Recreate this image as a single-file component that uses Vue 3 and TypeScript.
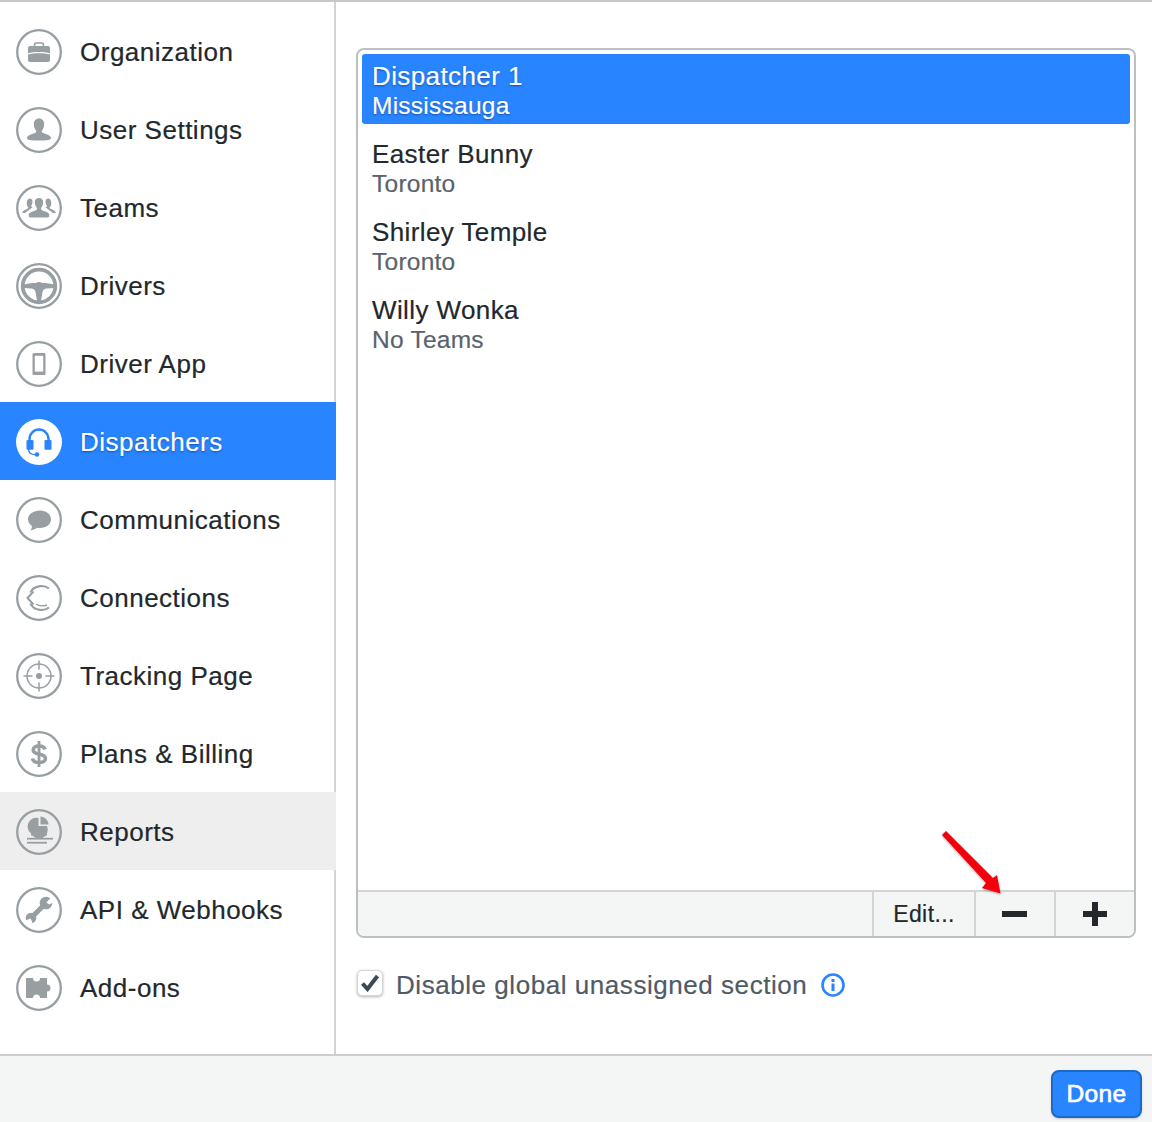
<script setup lang="ts">
const items = ['Organization','User Settings','Teams','Drivers','Driver App','Dispatchers','Communications','Connections','Tracking Page','Plans & Billing','Reports','API & Webhooks','Add-ons'];
const rows = [
  { name: 'Dispatcher 1', sub: 'Mississauga', selected: true },
  { name: 'Easter Bunny', sub: 'Toronto', selected: false },
  { name: 'Shirley Temple', sub: 'Toronto', selected: false },
  { name: 'Willy Wonka', sub: 'No Teams', selected: false },
];
</script>

<template>
  <div class="page">
    <div class="body">
      <nav class="side">
        <div v-for="(item, i) in items" :key="item" class="nav" :class="{ active: item === 'Dispatchers', hover: item === 'Reports' }">
          <svg class="ico" viewBox="0 0 46 46" width="46" height="46">
            <circle v-if="item === 'Dispatchers'" cx="23" cy="23" r="23" fill="#fff" />
            <circle v-else cx="23" cy="23" r="21.8" fill="none" stroke="#979fa3" stroke-width="2.3" />
            <g v-if="i === 0" fill="#979fa3">
              <path d="M12 19a2 2 0 0 1 2-2h18a2 2 0 0 1 2 2v5.2c-6-1.600-16-1.600-22 0z" />
              <path d="M12 25.400c6-1.600 16-1.600 22 0V31a2 2 0 0 1-2 2H14a2 2 0 0 1-2-2z" />
              <path d="M18.600 17v-1.600a1.400 1.400 0 0 1 1.400-1.400h6a1.400 1.400 0 0 1 1.400 1.400V17" fill="none" stroke="#979fa3" stroke-width="1.600" />
            </g>
            <path v-else-if="i === 1" fill="#979fa3" d="M23 11.500c3.200 0 5.200 2.400 5.200 5.600 0 2.600-1 5-2.200 6.400-.6.8-.3 1.800.6 2.300 2.800 1.400 8.400 2.400 8.400 5.400 0 1.600-4 2.400-12 2.400s-12-.8-12-2.400c0-3 5.600-4 8.400-5.400.9-.5 1.200-1.500.6-2.300-1.200-1.400-2.200-3.800-2.200-6.400 0-3.200 2-5.600 5.200-5.600z" />
            <g v-else-if="i === 2" fill="#979fa3">
              <path d="M13.500 13.500c1.800 0 3 1.200 3 3.200 0 1.500-.5 2.800-1.200 3.700-.3.500-.2 1 .3 1.300l1 .6-7.600 5.700H6.800c-.5 0-.8-.4-.5-.9 1-1.800 3.700-2.700 5.500-3.600.5-.3.6-.8.3-1.300-.8-1-1.400-2.400-1.400-3.800 0-2.500 1-4.900 2.800-4.900z" />
              <path d="M32.500 13.500c-1.800 0-3 1.200-3 3.200 0 1.500.5 2.800 1.200 3.700.3.500.2 1-.3 1.300l-1 .6 7.600 5.700h2.200c.5 0 .8-.4.5-.9-1-1.800-3.700-2.700-5.500-3.600-.5-.3-.6-.8-.3-1.300.8-1 1.400-2.400 1.400-3.800 0-2.500-1-4.900-2.800-4.900z" />
              <path stroke="#fff" stroke-width="1.200" d="M23 12.400c3 0 4.800 2.100 4.800 5.100 0 2.200-.9 4.200-1.900 5.400-.5.700-.3 1.500.5 1.900 2.500 1.200 7.600 2 7.600 4.700 0 1.900-.8 3.500-2 3.500H14c-1.200 0-2-1.600-2-3.500 0-2.700 5.100-3.500 7.600-4.700.8-.4 1-1.200.5-1.900-1-1.200-1.900-3.200-1.900-5.400 0-3 1.800-5.100 4.800-5.100z" />
            </g>
            <g v-else-if="i === 3">
              <circle cx="23" cy="23" r="16.300" fill="none" stroke="#979fa3" stroke-width="3.800" />
              <path fill="#979fa3" d="M7 21.500c5-.8 8-1.500 12-1.500h8c4 0 7 .7 12 1.500V25l-8 .5c-2.500 0-4 1.500-4.500 3.500L25 38h-4l-1.500-9c-.5-2-2-3.500-4.500-3.500L7 25z" />
              <circle cx="23" cy="23.500" r="4.500" fill="#979fa3" />
            </g>
            <g v-else-if="i === 4">
              <rect x="16.500" y="12" width="13" height="22" rx="1.500" fill="#979fa3" />
              <rect x="18.800" y="14.800" width="8.400" height="15.800" fill="#fff" />
            </g>
            <g v-else-if="i === 5" fill="#2884ff">
              <path d="M13.500 23.500v-3.500a9.500 9.500 0 0 1 19 0v3.500" fill="none" stroke="#2884ff" stroke-width="2.400" />
              <rect x="10.500" y="21" width="7" height="9.800" rx="1" />
              <rect x="28.500" y="21" width="7" height="9.800" rx="1" />
              <path d="M12.500 30c0 3.500 2 5.600 7 5.600" fill="none" stroke="#2884ff" stroke-width="1.300" />
              <circle cx="21" cy="35.500" r="2.300" />
            </g>
            <path v-else-if="i === 6" fill="#979fa3" d="M24 13.500c6.400 0 11 3.700 11 8.800S30.400 31 24 31c-1.100 0-2.200-.1-3.200-.3-1.600 1.400-3.800 2.400-6.300 2.700 1-1.300 1.500-2.800 1.400-4.400-2.400-1.600-3.900-4-3.900-6.700 0-5.100 5.600-8.800 12-8.800z" />
            <g v-else-if="i === 7" fill="none" stroke="#979fa3">
              <path d="M33 13.500c-3-2.300-6-2.800-9-2.400-5 .7-8.500 3.500-9.500 6.400" stroke-width="2.200" />
              <path d="M14.500 28.500c1 2.900 4.500 5.700 9.500 6.400 3 .4 6-.1 9-2.400" stroke-width="2.200" />
              <path d="M17.500 16.500L11.500 23l6 6.500" stroke-width="2" />
              <path d="M20 29c2.500 2 6.500 2.400 11 1" stroke-width="1.400" />
            </g>
            <g v-else-if="i === 8" fill="none" stroke="#979fa3" stroke-width="1.500">
              <circle cx="23" cy="23" r="12" />
              <path d="M23 7.500v9M23 29.500v9M7.500 23h9M29.500 23h9" />
              <circle cx="23" cy="23" r="3" fill="#979fa3" stroke="none" />
            </g>
            <g v-else-if="i === 9">
              <path fill="none" stroke="#979fa3" stroke-width="3.600" d="M29 18.500c-.5-2.300-2.700-3.500-6-3.500s-5.800 1.400-5.800 3.900c0 5.800 12.300 3 12.300 8.600 0 2.500-2.800 4-6.500 4-3.600 0-6-1.500-6.500-4" />
              <path stroke="#979fa3" stroke-width="2.800" fill="none" d="M23 10v26" />
            </g>
            <g v-else-if="i === 10" fill="#979fa3">
              <path d="M22.500 9v8h8.500A8.800 8.800 0 0 1 15 24.500 8.800 8.800 0 0 1 22.500 9z" />
              <path d="M24.500 7.500a8.500 8.500 0 0 1 8 8h-8z" />
              <rect x="15" y="25" width="16" height="1.500" />
              <rect x="11" y="28.800" width="26" height="1.800" />
              <rect x="11" y="32.800" width="20" height="1.800" />
            </g>
            <g v-else-if="i === 11" fill="#979fa3">
              <path d="M14.500 31.500L30 16" stroke="#979fa3" stroke-width="5" fill="none" />
              <circle cx="30" cy="16" r="6.300" />
              <circle cx="15" cy="31" r="5.300" />
              <path fill="#fff" d="M30.500 15.500L37 8l3.500 6-7.500 3.500z" />
              <path fill="#fff" d="M14.500 31.500L8 34l3.500 5 5-3.500z" />
            </g>
            <path v-else-if="i === 12" fill="#979fa3" d="M10 13H17a3.500 3.500 0 0 0 7 0H31V19.500a3.500 3.500 0 0 1 0 7V33H24a3.500 3.500 0 0 0-7 0H10z" />
          </svg>
          <span class="label">{{ item }}</span>
        </div>
      </nav>
      <main class="main">
        <div class="panel">
          <ul class="list">
            <li v-for="r in rows" :key="r.name" class="row" :class="{ sel: r.selected }">
              <div class="name">{{ r.name }}</div>
              <div class="sub">{{ r.sub }}</div>
            </li>
          </ul>
          <div class="toolbar">
            <div class="spacer"></div>
            <div class="tool edit">Edit...</div>
            <div class="tool minus"><svg width="26" height="8" viewBox="0 0 26 8"><rect y="1" width="25" height="6" fill="#22282c" /></svg></div>
            <div class="tool plus"><svg width="26" height="26" viewBox="0 0 26 26"><path fill="#22282c" d="M10 1h6v9h9v6h-9v9h-6v-9H1v-6h9z" /></svg></div>
          </div>
          <svg class="arrow" width="70" height="70" viewBox="0 0 70 70">
            <defs><filter id="sh" x="-20%" y="-20%" width="140%" height="140%"><feDropShadow dx="0" dy="1" stdDeviation="1" flood-color="#000" flood-opacity=".35" /></filter></defs>
            <path filter="url(#sh)" fill="#f4050b" d="M0 4L4 0L51 47L55 44L58.500 62.500L40 57L44 52z" />
          </svg>
        </div>
        <div class="check">
          <span class="box"><svg width="20" height="18" viewBox="0 0 20 18"><path fill="none" stroke="#3e4a52" stroke-width="4" d="M2.500 9.500l5 5.500 10-13" /></svg></span>
          <span class="check-label">Disable global unassigned section</span>
          <svg class="info" width="24" height="24" viewBox="0 0 24 24"><circle cx="12" cy="12" r="10.500" fill="none" stroke="#2884ff" stroke-width="2.600" /><rect x="10.500" y="10.500" width="3" height="7.500" fill="#2884ff" /><rect x="10.500" y="6" width="3" height="3" fill="#2884ff" /></svg>
        </div>
      </main>
    </div>
    <footer class="foot">
      <button class="done" type="button">Done</button>
    </footer>
  </div>
</template>

<style>
html, body { margin: 0; background: #fff; }
</style>

<style scoped>
.page { width: 1152px; height: 1122px; display: flex; flex-direction: column; border-top: 2px solid #c6c9ca; box-sizing: border-box; font-family: "Liberation Sans", Arial, sans-serif; color: #22282c; overflow: hidden; -webkit-text-stroke: .2px; }
.body { flex: 1; display: flex; min-height: 0; }
.side { width: 336px; box-sizing: border-box; padding-top: 10px; border-right: 2px solid #d2d4d5; flex: none; }
.nav { height: 78px; box-sizing: border-box; padding-top: 2px; margin-right: -2px; display: flex; align-items: center; padding-left: 16px; gap: 18px; position: relative; }
.nav.active { background: #2884ff; color: #fff; }
.nav.hover { background: #eeeeee; }
.nav.active .label { text-shadow: 0 1px 2px rgba(0, 40, 110, .55); }
.ico { flex: none; display: block; }
.label { font-size: 26px; letter-spacing: .5px; line-height: 30px; }
.main { flex: 1; padding: 46px 16px 0 20px; min-width: 0; }
.panel { position: relative; height: 890px; box-sizing: border-box; border: 2px solid #bcc0c2; border-radius: 8px; display: flex; flex-direction: column; overflow: visible; }
.list { flex: 1; list-style: none; margin: 0; padding: 4px 4px 0; }
.row { height: 70px; margin-bottom: 8px; padding: 7px 10px 0; box-sizing: border-box; border-radius: 3px; }
.row.sel { background: #2884ff; color: #fff; text-shadow: 0 1px 2px rgba(0, 40, 110, .55); }
.name { font-size: 26px; letter-spacing: .4px; line-height: 30px; }
.sub { font-size: 24.500px; letter-spacing: .25px; line-height: 29px; color: #59636d; }
.row.sel .sub { color: #fff; }
.toolbar { height: 46px; flex: none; box-sizing: border-box; border-top: 2px solid #d2d4d5; background: #f4f5f5; border-radius: 0 0 6px 6px; display: flex; }
.spacer { flex: 1; }
.tool { display: flex; align-items: center; justify-content: center; border-left: 2px solid #d2d4d5; box-sizing: border-box; height: 44px; font-size: 23px; letter-spacing: .4px; }
.edit { width: 102px; }
.minus { width: 80px; }
.plus { width: 80px; }
.arrow { position: absolute; left: 584px; top: 781px; pointer-events: none; }
.check { display: flex; align-items: center; margin-top: 33px; height: 28px; padding-left: 1px; }
.box { width: 26px; height: 26px; margin-top: -5px; box-sizing: border-box; border: 1px solid #d4d6d7; border-radius: 5px; background: #fff; box-shadow: 0 1px 3px rgba(0,0,0,.3); display: flex; align-items: center; justify-content: center; flex: none; }
.check-label { margin-left: 13px; font-size: 26px; letter-spacing: .55px; color: #4f5b66; }
.info { margin-left: 14px; flex: none; }
.foot { height: 68px; flex: none; box-sizing: border-box; border-top: 2px solid #cbced0; background: #f4f5f5; display: flex; justify-content: flex-end; align-items: flex-start; padding: 14px 10px 0 0; }
.done { width: 91px; height: 48px; box-sizing: border-box; border: 2px solid #1b6ac9; border-radius: 8px; background: #2884ff; color: #fff; font: 400 24.500px "Liberation Sans", Arial, sans-serif; letter-spacing: .3px; -webkit-text-stroke: .7px #fff; padding: 0; box-shadow: 0 1px 2px rgba(0,0,0,.2); }
</style>
